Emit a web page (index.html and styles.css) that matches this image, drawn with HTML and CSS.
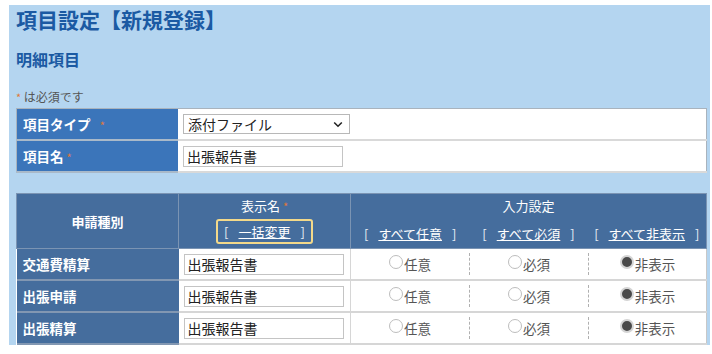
FILE: index.html
```html
<!DOCTYPE html>
<html lang="ja">
<head>
<meta charset="utf-8">
<title>項目設定【新規登録】</title>
<link rel="stylesheet" href="styles.css">
</head>
<body>
<div class="panel">
  <h1 class="title">項目設定【新規登録】</h1>
  <h2 class="subtitle">明細項目</h2>
  <p class="note"><span class="req">*</span> は必須です</p>

  <table class="form-table">
    <tr>
      <th class="lbl">項目タイプ&nbsp;&nbsp;&nbsp;<span class="req">*</span></th>
      <td class="val">
        <div class="select">
          <span class="select-text">添付ファイル</span>
          <svg class="chev" width="10" height="7" viewBox="0 0 10 7"><path d="M1.2 1.5 L5 5.2 L8.8 1.5" fill="none" stroke="#222" stroke-width="1.6"/></svg>
        </div>
      </td>
    </tr>
    <tr>
      <th class="lbl">項目名 <span class="req">*</span></th>
      <td class="val"><input class="text-input" type="text" value="出張報告書"></td>
    </tr>
  </table>

  <table class="grid-table">
    <tr class="head">
      <th class="h-kind">申請種別</th>
      <th class="h-name">
        <div class="h-line">表示名 <span class="req">*</span></div>
        <div class="bulk"><span class="br">[</span><a href="#" class="lnk">一括変更</a><span class="br">]</span></div>
      </th>
      <th class="h-input" colspan="3">
        <div class="h-line">入力設定</div>
        <div class="all-links">
          <span class="grp"><span class="br">[</span><a href="#" class="lnk">すべて任意</a><span class="br">]</span></span>
          <span class="grp"><span class="br">[</span><a href="#" class="lnk">すべて必須</a><span class="br">]</span></span>
          <span class="grp"><span class="br">[</span><a href="#" class="lnk">すべて非表示</a><span class="br">]</span></span>
        </div>
      </th>
    </tr>
    <tr>
      <th class="kind">交通費精算</th>
      <td class="name"><input class="text-input" type="text" value="出張報告書"></td>
      <td class="opt"><div class="opt-in first"><span class="radio"></span>任意</div></td>
      <td class="opt"><div class="opt-in"><span class="radio"></span>必須</div></td>
      <td class="opt"><div class="opt-in"><span class="radio on"></span>非表示</div></td>
    </tr>
    <tr>
      <th class="kind">出張申請</th>
      <td class="name"><input class="text-input" type="text" value="出張報告書"></td>
      <td class="opt"><div class="opt-in first"><span class="radio"></span>任意</div></td>
      <td class="opt"><div class="opt-in"><span class="radio"></span>必須</div></td>
      <td class="opt"><div class="opt-in"><span class="radio on"></span>非表示</div></td>
    </tr>
    <tr>
      <th class="kind">出張精算</th>
      <td class="name"><input class="text-input" type="text" value="出張報告書"></td>
      <td class="opt"><div class="opt-in first"><span class="radio"></span>任意</div></td>
      <td class="opt"><div class="opt-in"><span class="radio"></span>必須</div></td>
      <td class="opt"><div class="opt-in"><span class="radio on"></span>非表示</div></td>
    </tr>
  </table>
</div>
</body>
</html>
```
FILE: styles.css
```css
html, body {
  margin: 0;
  padding: 0;
  background: #ffffff;
}
body {
  padding: 5px 2px 0 9px;
  font-family: "Noto Sans CJK JP", "Noto Sans", sans-serif;
  color: #333;
}
.panel {
  background: #b4d5f0;
  padding: 0 3px 0 7px;
}
.title {
  margin: 0;
  font-size: 21px;
  line-height: 28px;
  font-weight: 700;
  color: #1b5aa3;
}
.subtitle {
  margin: 14px 0 0;
  font-size: 16px;
  line-height: 24px;
  font-weight: 700;
  color: #1b5aa3;
}
.note {
  margin: 18px 0 0;
  font-size: 12px;
  line-height: 16px;
  color: #555;
}
.req {
  color: #e0783a;
  font-size: 11px;
  font-weight: 400;
}
.form-table {
  margin-top: 3px;
  width: 691px;
  border-collapse: collapse;
  border: 1px solid #a9b3bd;
  background: #fff;
}
.form-table .lbl {
  width: 155px;
  height: 30px;
  padding: 0 0 0 6px;
  background: #3b75ba;
  color: #fff;
  font-size: 13.5px;
  font-weight: 700;
  text-align: left;
  border-bottom: 2px solid #a9b9c9;
}
.form-table .val {
  padding: 0 0 0 5px;
  border-bottom: 2px solid #d9d9d9;
}
.select {
  width: 155px;
  height: 18px;
  border: 1px solid #b8b8b8;
  padding: 0 6px 0 4px;
  display: flex;
  align-items: center;
  justify-content: space-between;
  background: #fff;
  font-size: 14px;
  color: #222;
}
.text-input {
  display: block;
  box-sizing: border-box;
  width: 160px;
  height: 21px;
  margin: 0;
  border: 1px solid #c4c4c4;
  padding: 0 3px;
  font-family: "Noto Sans CJK JP", "Noto Sans", sans-serif;
  font-size: 14px;
  color: #222;
  background: #fff;
}
.grid-table {
  margin-top: 20px;
  width: 691px;
  border-collapse: collapse;
  background: #fff;
  table-layout: fixed;
}
.grid-table th, .grid-table td {
  padding: 0;
}
.head th {
  height: 54px;
  background: #456d9d;
  color: #fff;
  font-size: 13px;
  font-weight: 700;
  border: 1px solid #7b94b3;
  vertical-align: middle;
}
.h-kind { width: 161px; }
.h-name { width: 171px; }
.h-line {
  line-height: 16px;
  font-weight: 400;
}
.h-name .h-line, .h-input .h-line { font-weight: 400; }
.bulk {
  display: inline-flex;
  align-items: center;
  gap: 10px;
  margin-top: 5px;
  padding: 0 6px;
  height: 21px;
  border: 2px solid #f3d98a;
  border-radius: 3px;
  font-weight: 400;
}
.br {
  color: #e8eef5;
  font-weight: 400;
}
.lnk {
  color: #fff;
  text-decoration: underline;
  font-weight: 400;
}
.all-links {
  display: flex;
  margin-top: 10px;
  line-height: 20px;
}
.grp {
  flex: 1;
  display: flex;
  justify-content: center;
  gap: 10px;
}
.kind {
  height: 30px;
  background: #456d9d;
  color: #fff;
  font-size: 13.5px;
  font-weight: 700;
  text-align: left;
  padding-left: 6px !important;
  border-bottom: 2px solid #8297b2;
}
.name {
  padding-left: 5px !important;
  border-bottom: 2px solid #d6d6d6;
  border-right: 1px solid #d6d6d6;
}
.opt {
  border-bottom: 2px solid #d6d6d6;
}
.opt:last-child {
  border-right: 1px solid #c8c8c8;
}
.opt-in {
  height: 22px;
  display: flex;
  align-items: center;
  justify-content: center;
  border-left: 1px dashed #b0b0b0;
  font-size: 13.5px;
  color: #555;
}
.opt-in.first {
  border-left: none;
}
.radio {
  flex-shrink: 0;
  width: 14px;
  height: 14px;
  border: 1px solid #bdbdbd;
  border-radius: 50%;
  box-sizing: border-box;
  background: #fff;
  margin-right: 1px;
  position: relative;
  top: -2px;
}
.radio.on {
  background: #4a4a4a;
  border: 2px solid #d4d4d4;
}
```
